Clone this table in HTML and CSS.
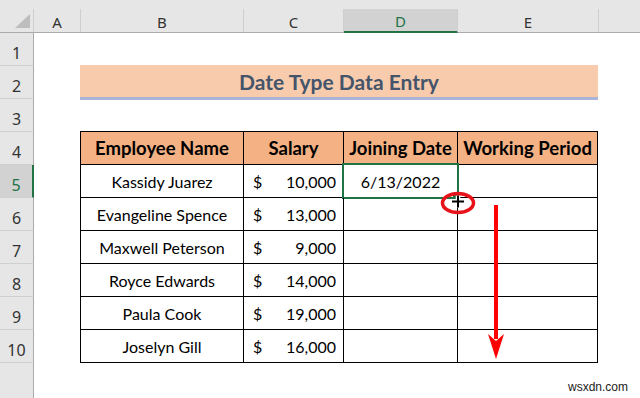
FILE: index.html
```html
<!DOCTYPE html>
<html>
<head>
<meta charset="utf-8">
<link rel="stylesheet" href="styles.css">
</head>
<body>
<div class="app">
  <div class="colhdr">
    <div class="corner"><span class="tri"></span></div>
    <div class="ch w-a">A</div>
    <div class="ch w-b">B</div>
    <div class="ch w-c">C</div>
    <div class="ch w-d active">D</div>
    <div class="ch w-e">E</div>
    <div class="ch rest"></div>
  </div>
  <div class="main">
    <div class="rowhdr">
      <div class="rh">1</div>
      <div class="rh">2</div>
      <div class="rh">3</div>
      <div class="rh">4</div>
      <div class="rh active">5</div>
      <div class="rh">6</div>
      <div class="rh">7</div>
      <div class="rh">8</div>
      <div class="rh">9</div>
      <div class="rh">10</div>
      <div class="rh-rest"></div>
    </div>
    <div class="sheet">
      <div class="title">Date Type Data Entry</div>
      <div class="tbl">
        <div class="cell head">Employee Name</div>
        <div class="cell head">Salary</div>
        <div class="cell head">Joining Date</div>
        <div class="cell head">Working Period</div>

        <div class="cell">Kassidy Juarez</div>
        <div class="cell money"><span>$</span><span>10,000</span></div>
        <div class="cell selected">6/13/2022<span class="selbox"></span></div>
        <div class="cell"></div>

        <div class="cell">Evangeline Spence</div>
        <div class="cell money"><span>$</span><span>13,000</span></div>
        <div class="cell"></div>
        <div class="cell"></div>

        <div class="cell">Maxwell Peterson</div>
        <div class="cell money"><span>$</span><span>9,000</span></div>
        <div class="cell"></div>
        <div class="cell"></div>

        <div class="cell">Royce Edwards</div>
        <div class="cell money"><span>$</span><span>14,000</span></div>
        <div class="cell"></div>
        <div class="cell"></div>

        <div class="cell">Paula Cook</div>
        <div class="cell money"><span>$</span><span>19,000</span></div>
        <div class="cell"></div>
        <div class="cell"></div>

        <div class="cell">Joselyn Gill</div>
        <div class="cell money"><span>$</span><span>16,000</span></div>
        <div class="cell"></div>
        <div class="cell"></div>
      </div>
    </div>
  </div>
  <svg class="overlay" width="640" height="398" viewBox="0 0 640 398">
    <rect x="453" y="194" width="4" height="4" fill="#217346"/>
    <path d="M452 201.5 H464 M458 195.5 V207.5" stroke="#fff" stroke-width="4.5"/>
    <path d="M452 201.5 H464 M458 195.5 V207.5" stroke="#000" stroke-width="2"/>
    <ellipse cx="458" cy="203" rx="15.5" ry="9.5" fill="none" stroke="#e8121a" stroke-width="3.5"/>
    <rect x="494" y="205" width="4" height="134" fill="#f00"/>
    <path d="M488 334 L496 341 L504 334 L496 359 Z" fill="#f00"/>
  </svg>
  <div class="wm">wsxdn.com</div>
</div>
</body>
</html>
```

FILE: styles.css
```css
* { box-sizing: border-box; }
html, body { margin: 0; padding: 0; }
body { width: 640px; height: 398px; overflow: hidden; background: #fff; }

.app { position: relative; width: 640px; height: 398px; }

.colhdr {
  display: flex;
  align-items: flex-end;
  height: 33px;
  background: #e6e6e6;
  border-bottom: 1px solid #ababab;
}
.corner {
  position: relative;
  width: 34px;
  height: 23px;
  border-right: 1px solid #cfcfcf;
}
.tri {
  position: absolute;
  right: 3px;
  bottom: 4px;
  width: 0; height: 0;
  border-left: 15px solid transparent;
  border-bottom: 14px solid #bdbdbd;
}
.ch {
  height: 23px;
  border-right: 1px solid #cfcfcf;
  display: flex;
  align-items: center;
  justify-content: center;
  font-family: "Noto Sans", "Open Sans", sans-serif;
  font-size: 15px;
  color: #333;
  padding-top: 2px;
}
.w-a { width: 47px; }
.w-b { width: 163px; }
.w-c { width: 100px; }
.w-d { width: 114px; }
.w-e { width: 141px; }
.rest { flex: 1; border-right: none; }
.ch.active {
  background: #d2d2d2;
  color: #217346;
  border-bottom: 2px solid #217346;
  margin-bottom: -1px;
  height: 24px;
}

.main { display: flex; height: 365px; }
.rowhdr { width: 34px; display: flex; flex-direction: column; background: #e6e6e6; }
.rh {
  height: 33px;
  border-right: 1px solid #ababab;
  border-bottom: 1px solid #cfcfcf;
  display: flex;
  align-items: center;
  justify-content: center;
  padding-top: 8px;
  font-family: "Noto Sans", "Open Sans", sans-serif;
  font-size: 16px;
  color: #333;
}
.rh.active {
  background: #d2d2d2;
  color: #217346;
  border-right: 2px solid #217346;
}
.rh-rest { flex: 1; border-right: 1px solid #ababab; }

.sheet { flex: 1; padding-left: 46px; }
.title {
  margin-top: 32px;
  width: 518px;
  height: 35px;
  background: #f8cbad;
  border-bottom: 3px solid #a9b4d6;
  display: flex;
  align-items: center;
  justify-content: center;
  font-family: "Lato", "Open Sans", sans-serif;
  font-weight: 700;
  font-size: 21px;
  color: #44546a;
}
.tbl {
  margin-top: 31px;
  display: grid;
  grid-template-columns: 163px 100px 114px 140px;
  grid-auto-rows: 33px;
  width: 518px;
  border-left: 1px solid #000;
  border-top: 1px solid #000;
}
.cell {
  position: relative;
  border-right: 1px solid #000;
  border-bottom: 1px solid #000;
  display: flex;
  align-items: center;
  justify-content: center;
  font-family: "Lato", "Open Sans", sans-serif;
  font-size: 16px;
  color: #000;
}
.cell.head {
  background: #f4b183;
  font-weight: 700;
  font-size: 18.5px;
}
.cell.money {
  justify-content: space-between;
  padding: 0 7px 0 9px;
}
.selbox {
  position: absolute;
  left: -2px; top: -2px; right: -2px; bottom: -2px;
  border: 2px solid #217346;
}

.overlay { position: absolute; top: 0; left: 0; pointer-events: none; }
.wm {
  position: absolute;
  right: 12px;
  bottom: 4px;
  font-family: "Liberation Sans", Arial, sans-serif;
  font-size: 12px;
  color: #222;
}
```
